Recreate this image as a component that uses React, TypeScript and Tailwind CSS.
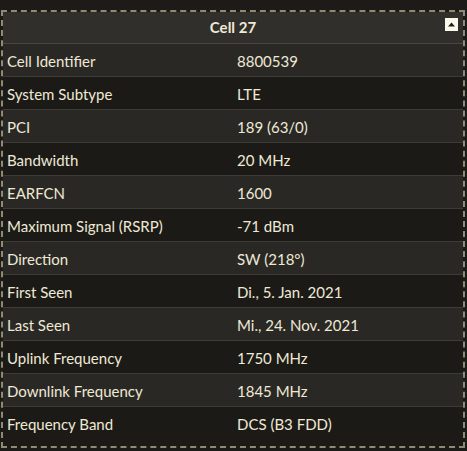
import { useState } from 'react';

const rows: [string, string][] = [
  ['Cell Identifier', '8800539'],
  ['System Subtype', 'LTE'],
  ['PCI', '189 (63/0)'],
  ['Bandwidth', '20 MHz'],
  ['EARFCN', '1600'],
  ['Maximum Signal (RSRP)', '-71 dBm'],
  ['Direction', 'SW (218°)'],
  ['First Seen', 'Di., 5. Jan. 2021'],
  ['Last Seen', 'Mi., 24. Nov. 2021'],
  ['Uplink Frequency', '1750 MHz'],
  ['Downlink Frequency', '1845 MHz'],
  ['Frequency Band', 'DCS (B3 FDD)'],
];

export default function App() {
  const [open, setOpen] = useState(true);

  return (
    <div
      className="w-[467px] h-[451px] bg-[#1c1b18] pt-[10px] pl-[1px] text-[#efe9d5]"
      style={{ fontFamily: 'Lato, "Open Sans", sans-serif' }}
    >
      <div className="w-[464px] h-[438px] border-2 border-dashed border-[#8f8a74] bg-[#1b1a17] flex flex-col">
        {/* header */}
        <div className="relative h-[32px] shrink-0 flex items-center justify-center bg-[#302f2b] border-b border-[#48463f]">
          <span className="text-[15px] font-bold">Cell 27</span>
          <button
            onClick={() => setOpen(!open)}
            className="absolute right-[5px] top-[6px] w-[13px] h-[13px] bg-[#fbf8ee] flex items-center justify-center"
          >
            <svg width="7" height="5" viewBox="0 0 7 5">
              <path d={open ? 'M0 4.5 L3.5 0.5 L7 4.5 Z' : 'M0 0.5 L3.5 4.5 L7 0.5 Z'} fill="#1f1e1a" />
            </svg>
          </button>
        </div>

        {/* table */}
        {open && (
          <div className="flex flex-col">
            {rows.map(([label, value], i) => (
              <div
                key={label}
                className={`h-[33px] pt-[2px] flex items-center text-[15px] border-b border-[#3c3b36] last:border-b-0 ${
                  i % 2 === 0 ? 'bg-[#292825]' : 'bg-[#1b1a17]'
                }`}
              >
                <div className="w-[234px] pl-[4px]">{label}</div>
                <div>{value}</div>
              </div>
            ))}
          </div>
        )}
      </div>
    </div>
  );
}
